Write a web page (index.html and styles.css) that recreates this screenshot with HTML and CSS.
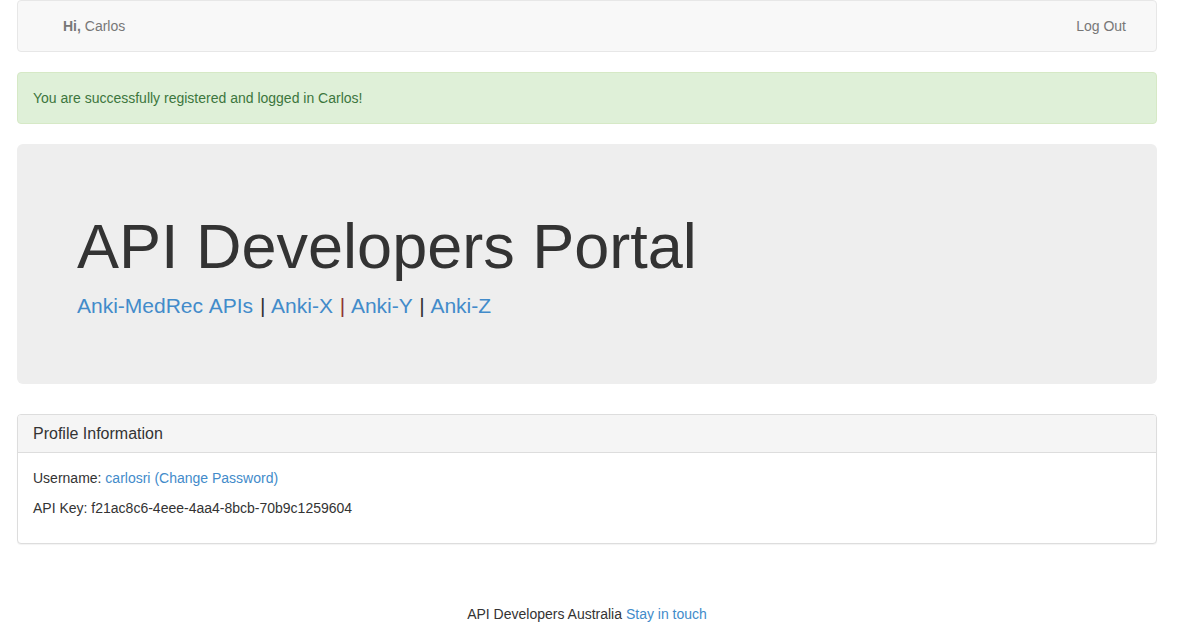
FILE: index.html
```html
<!DOCTYPE html>
<html lang="en">
<head>
<meta charset="utf-8">
<title>API Developers Portal</title>
<link rel="stylesheet" href="styles.css">
</head>
<body>
<div class="container">
  <nav class="navbar">
    <p class="navbar-text"><strong>Hi,</strong> Carlos</p>
    <a class="navbar-link" href="#">Log Out</a>
  </nav>

  <div class="alert">You are successfully registered and logged in Carlos!</div>

  <div class="jumbotron">
    <h1>API Developers Portal</h1>
    <p class="apis"><a href="#">Anki-MedRec APIs</a> <span class="sep">|</span> <a href="#">Anki-X</a> <span class="sep sep-red">|</span> <a href="#">Anki-Y</a> <span class="sep">|</span> <a href="#">Anki-Z</a></p>
  </div>

  <div class="panel">
    <div class="panel-heading"><h3 class="panel-title">Profile Information</h3></div>
    <div class="panel-body">
      <p>Username: <a href="#">carlosri</a> <a href="#">(Change Password)</a></p>
      <p>API Key: f21ac8c6-4eee-4aa4-8bcb-70b9c1259604</p>
    </div>
  </div>

  <footer class="footer">API Developers Australia <a href="#">Stay in touch</a></footer>
</div>
</body>
</html>
```

FILE: styles.css
```css
* { box-sizing: border-box; }
html, body { margin: 0; padding: 0; }
body {
  font-family: "Liberation Sans", Arial, sans-serif;
  font-size: 14px;
  line-height: 1.42857143;
  color: #333;
  background: #fff;
}
a { color: #428bca; text-decoration: none; }
p { margin: 0 0 10px; }

.container {
  width: 1140px;
  margin-left: 17px;
}

.navbar {
  display: flex;
  justify-content: space-between;
  align-items: center;
  min-height: 52px;
  background: #f8f8f8;
  border: 1px solid #e7e7e7;
  border-radius: 4px;
  margin-bottom: 20px;
  padding: 0 30px 0 45px;
}
.navbar-text { margin: 0; color: #777; }
.navbar-text strong { color: #777; }
.navbar-link { color: #777; }

.alert {
  background: #dff0d8;
  border: 1px solid #d6e9c6;
  color: #3c763d;
  border-radius: 4px;
  padding: 15px;
  margin-bottom: 20px;
}

.jumbotron {
  background: #eee;
  border-radius: 6px;
  padding: 48px 60px;
  margin-bottom: 30px;
}
.jumbotron h1 {
  font-size: 63px;
  font-weight: 500;
  line-height: 1.1;
  margin: 20px 0 10px;
  color: #333;
}
.jumbotron .apis {
  font-size: 21px;
  font-weight: 200;
  margin: 0 0 15px;
  line-height: 1.42857143;
  word-spacing: 1px;
}
.sep { color: #333; }
.sep-red { color: #8e3434; }

.panel {
  border: 1px solid #ddd;
  border-radius: 4px;
  box-shadow: 0 1px 1px rgba(0,0,0,.05);
  margin-bottom: 20px;
  background: #fff;
}
.panel-heading {
  background: #f5f5f5;
  border-bottom: 1px solid #ddd;
  border-radius: 3px 3px 0 0;
  padding: 10px 15px;
}
.panel-title {
  margin: 0;
  font-size: 16px;
  font-weight: 500;
  line-height: 17px;
  color: #333;
}
.panel-body { padding: 15px; }

.footer {
  text-align: center;
  padding-top: 40px;
  line-height: 20px;
}
```
